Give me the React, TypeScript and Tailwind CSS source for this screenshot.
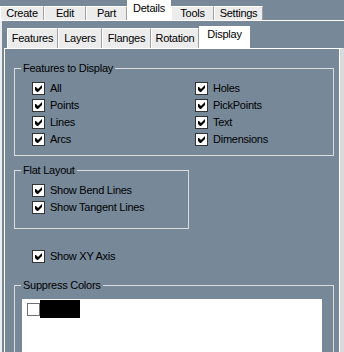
import React from "react"

const topTabs = [
  { label: "Create", cls: "w-[44px]" },
  { label: "Edit", cls: "w-[42px]" },
  { label: "Part", cls: "w-[41px]" },
  { label: "Details", cls: "w-[44px]", active: true },
  { label: "Tools", cls: "w-[43px]" },
  { label: "Settings", cls: "w-[49px]" },
]

const subTabs = [
  { label: "Features", cls: "w-[51px]" },
  { label: "Layers", cls: "w-[44px]" },
  { label: "Flanges", cls: "w-[49px]" },
  { label: "Rotation", cls: "w-[48px]" },
  { label: "Display", cls: "w-[51px]", active: true },
]

function Tab({ label, cls, active, tall }: { label: string; cls: string; active?: boolean; tall: string }) {
  if (active) {
    return (
      <div className={`${cls} ${tall} relative z-10 -mb-px flex justify-center bg-white pt-[2px] leading-[13px]`}>
        {label}
      </div>
    )
  }
  return (
    <div className={`${cls} flex items-center justify-center border-t border-l border-r border-t-white border-l-white border-r-[#a0a0a0] bg-[#ececec] leading-[13px]`}>
      {label}
    </div>
  )
}

function Box({ checked = true, light = false }: { checked?: boolean; light?: boolean }) {
  return (
    <span
      className={`flex h-[13px] w-[13px] shrink-0 items-center justify-center border bg-white ${
        light ? "border-[#707070]" : "border-[#333333]"
      }`}
    >
      {checked && (
        <svg width="11" height="11" viewBox="0 0 11 11">
          <polygon points="2,4 3,4 5,6 9,2 9,5 5,9 4,9 2,7" fill="#000" />
        </svg>
      )}
    </span>
  )
}

function Row({ label }: { label: string }) {
  return (
    <div className="flex h-[17px] items-center">
      <Box />
      <span className="ml-[5px] leading-[13px]">{label}</span>
    </div>
  )
}

function Group({ title, cls, children }: { title: string; cls: string; children: React.ReactNode }) {
  return (
    <fieldset className={`${cls} border border-[#dcdcdc]`}>
      <legend className="ml-[6px] px-[2px] leading-[13px]">{title}</legend>
      {children}
    </fieldset>
  )
}

export default function App() {
  return (
    <div className="flex h-[352px] w-[344px] flex-col overflow-hidden bg-[#778899] font-['Liberation_Sans',Arial,sans-serif] text-[11px] tracking-[-0.25px] text-black">
      <div className="flex h-[20px] items-end">
        {topTabs.map((t) => (
          <Tab key={t.label} {...t} tall="h-[21px]" />
        ))}
      </div>
      <div className="flex flex-1 flex-col border-t border-l-2 border-t-white border-l-[#eeeeee]">
        <div className="flex h-[27px] items-end pl-[5px]">
          {subTabs.map((t) => (
            <div key={t.label} className={t.active ? "" : "h-[20px] flex"}>
              <Tab {...t} tall="h-[23px]" />
            </div>
          ))}
        </div>
        <div className="ml-[2px] flex-1 border-t border-l border-r-[4px] border-t-white border-l-white border-r-[#d6d9dd] shadow-[inset_-1px_0_0_#ffffff]">
          <Group title="Features to Display" cls="ml-[9px] mt-[13px] h-[94px] w-[320px]">
            <div className="grid grid-cols-[163px_1fr] pl-[17px] pt-[5px]">
              <div>
                <Row label="All" />
                <Row label="Points" />
                <Row label="Lines" />
                <Row label="Arcs" />
              </div>
              <div>
                <Row label="Holes" />
                <Row label="PickPoints" />
                <Row label="Text" />
                <Row label="Dimensions" />
              </div>
            </div>
          </Group>
          <Group title="Flat Layout" cls="ml-[9px] mt-[8px] h-[65px] w-[175px]">
            <div className="pl-[17px] pt-[5px]">
              <Row label="Show Bend Lines" />
              <Row label="Show Tangent Lines" />
            </div>
          </Group>
          <div className="ml-[27px] mt-[19px]">
            <Row label="Show XY Axis" />
          </div>
          <Group title="Suppress Colors" cls="ml-[9px] mt-[14px] h-[120px] w-[320px]">
            <div className="ml-[7px] mt-[7px] h-[100px] w-[300px] bg-white pl-[5px]">
              <div className="flex items-start">
                <span className="mt-[4px]">
                  <Box checked={false} light />
                </span>
                <span className="mt-[1px] h-[18px] w-[40px] bg-black" />
              </div>
            </div>
          </Group>
        </div>
      </div>
    </div>
  )
}
